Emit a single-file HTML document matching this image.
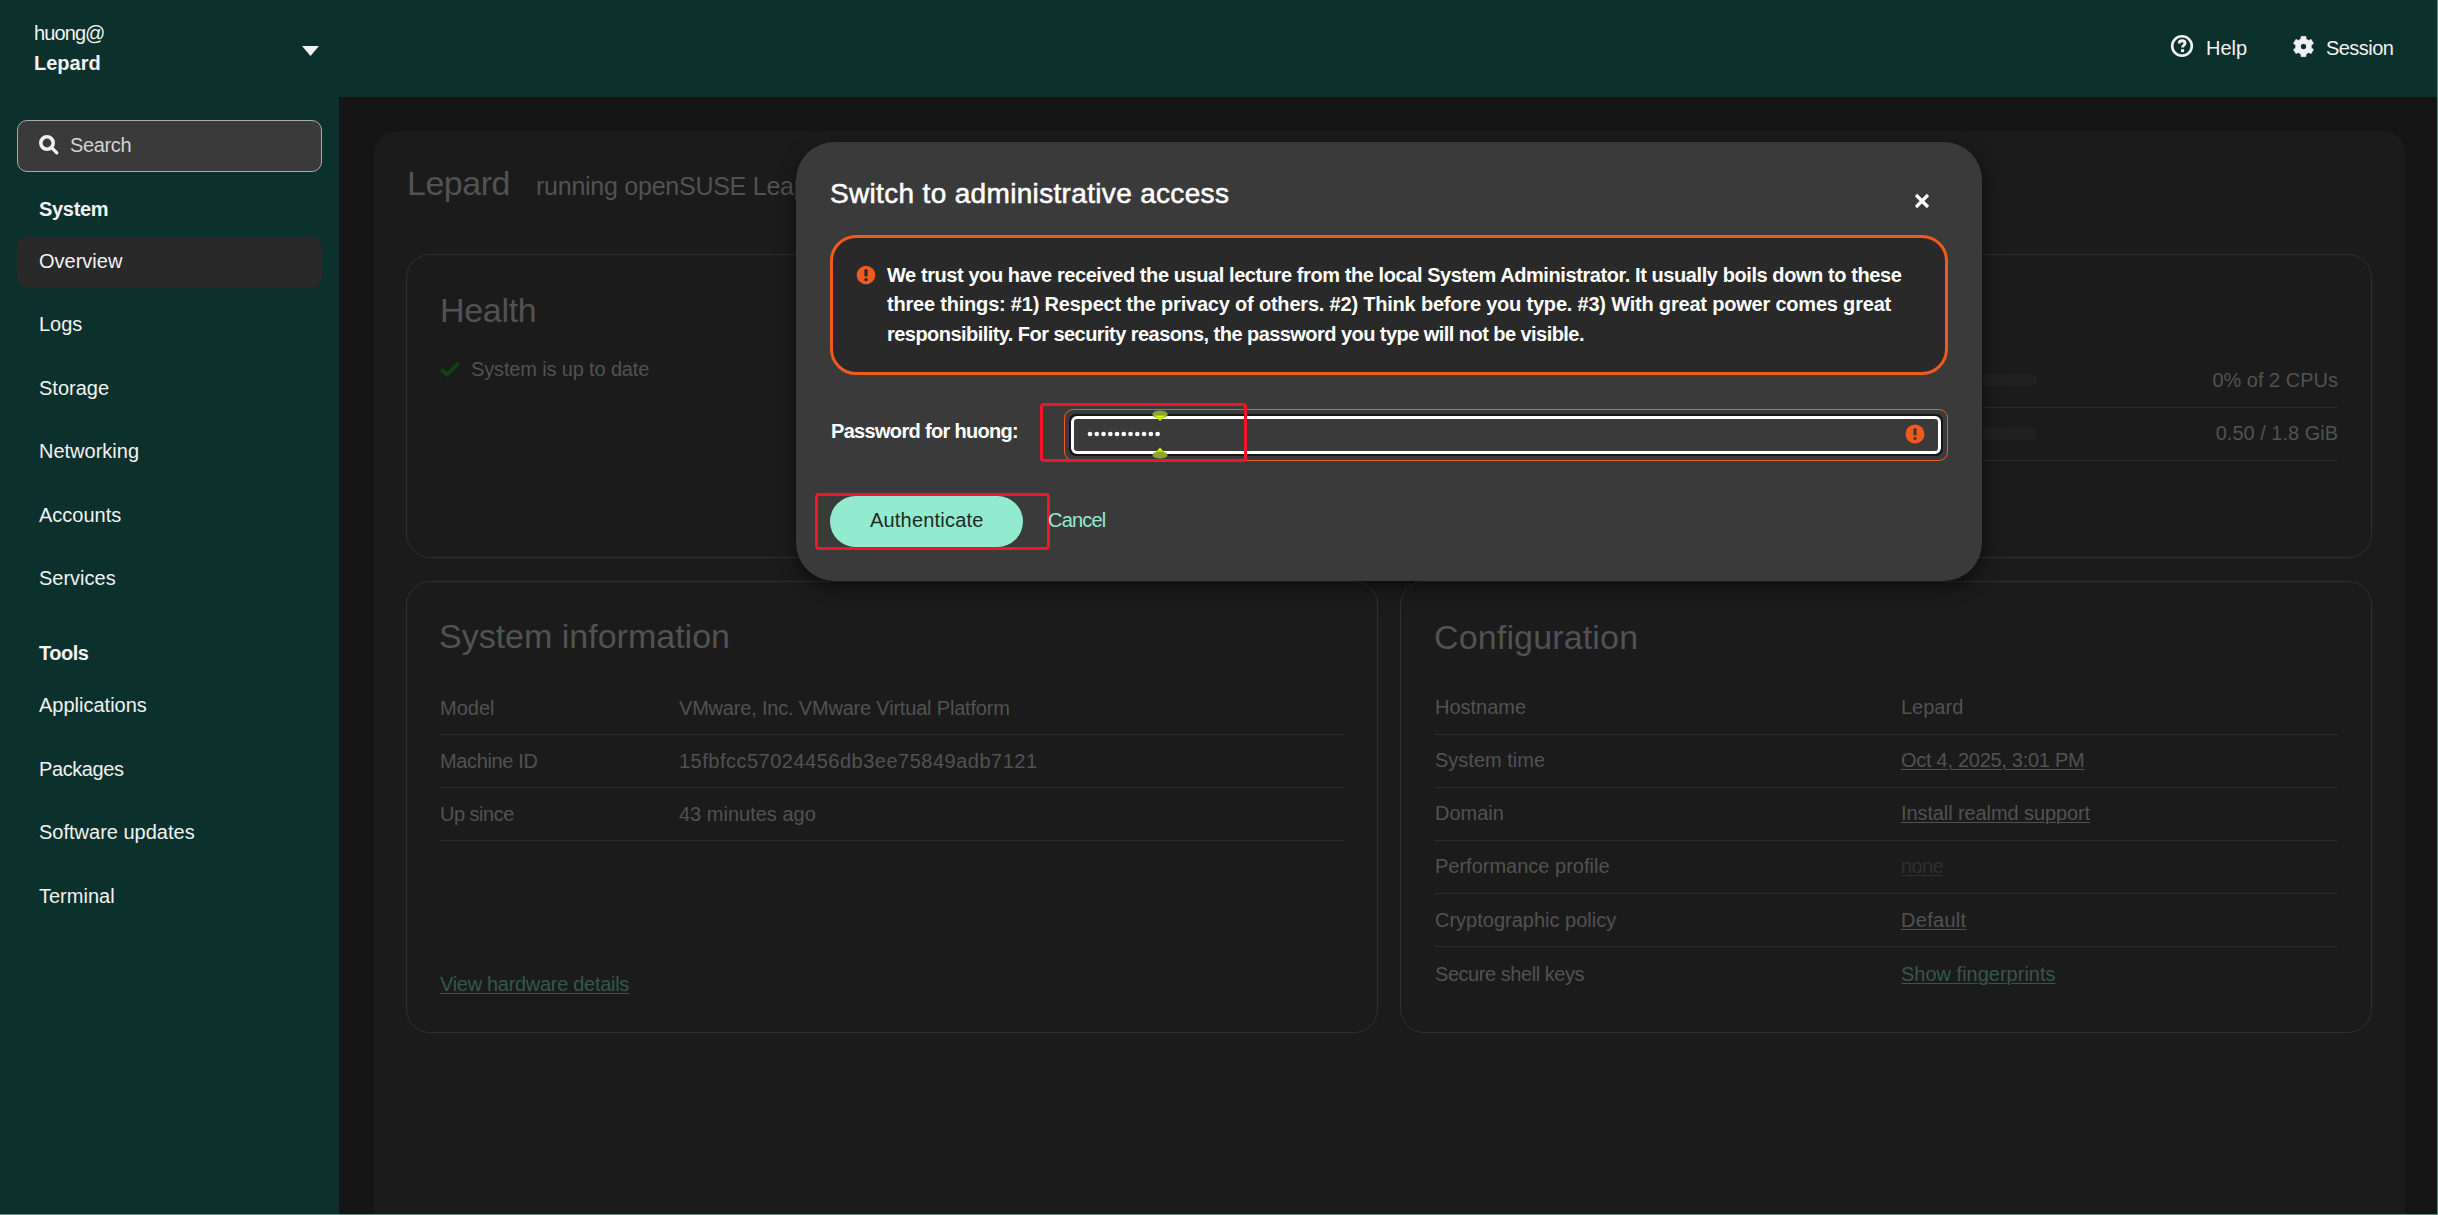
<!DOCTYPE html>
<html><head><meta charset="utf-8">
<style>
*{box-sizing:border-box;margin:0;padding:0}
html,body{width:2438px;height:1215px;overflow:hidden;background:#151515;font-family:"Liberation Sans",sans-serif;}
.abs{position:absolute;white-space:nowrap}
#header{position:absolute;left:0;top:0;width:2438px;height:97px;background:#0c302c}
#sidebar{position:absolute;left:0;top:97px;width:339px;height:1118px;background:#0c302c}
#main{position:absolute;left:339px;top:97px;width:2099px;height:1118px;background:#151515}
#panel{position:absolute;left:374px;top:131px;width:2031px;height:1100px;background:#1b1b1b;border-radius:22px}
.side{color:#f2f2f2;font-size:20px;line-height:24px}
.card{position:absolute;border:1.5px solid #2f2f2f;border-radius:24px}
.dim{color:#525252}
.hr{position:absolute;height:1px;background:#2c2c2c}
#modal{position:absolute;left:796px;top:142px;width:1186px;height:439px;background:#3a3a3a;border-radius:38px;box-shadow:0 6px 18px rgba(0,0,0,.55)}
</style></head>
<body>
<div id="header"></div>
<div id="sidebar"></div>
<div id="main"></div>
<div id="panel"></div>

<!-- header content -->
<div class="abs side" style="left:34px;top:21px;font-size:20px;letter-spacing:-0.9px">huong@</div>
<div class="abs side" style="left:34px;top:51px;font-size:20px;font-weight:bold">Lepard</div>
<svg class="abs" style="left:301px;top:45px" width="19" height="12" viewBox="0 0 19 12"><path d="M1 1 L18 1 L9.5 11 Z" fill="#f2f2f2"/></svg>

<!-- search -->
<div class="abs" style="left:17px;top:120px;width:305px;height:52px;background:#3a3a3a;border:1.5px solid #a9a9a9;border-radius:10px"></div>
<svg class="abs" style="left:38px;top:134px" width="22" height="22" viewBox="0 0 22 22"><circle cx="9" cy="9" r="6.2" fill="none" stroke="#f0f0f0" stroke-width="3.6"/><path d="M13.4 13.4 L18.8 18.8" stroke="#f0f0f0" stroke-width="3.3" stroke-linecap="round"/></svg>
<div class="abs" style="left:70px;top:133px;font-size:20px;line-height:24px;color:#d2d2d2;letter-spacing:-0.35px">Search</div>

<div class="abs side" style="left:39px;top:197px;font-weight:bold;letter-spacing:-0.3px">System</div>
<div class="abs" style="left:17px;top:237px;width:305px;height:51px;background:#292929;border-radius:10px"></div>
<div class="abs side" style="left:39px;top:249px">Overview</div>
<div class="abs side" style="left:39px;top:312px">Logs</div>
<div class="abs side" style="left:39px;top:376px">Storage</div>
<div class="abs side" style="left:39px;top:439px">Networking</div>
<div class="abs side" style="left:39px;top:503px">Accounts</div>
<div class="abs side" style="left:39px;top:566px">Services</div>
<div class="abs side" style="left:39px;top:641px;font-weight:bold;letter-spacing:-0.5px">Tools</div>
<div class="abs side" style="left:39px;top:693px">Applications</div>
<div class="abs side" style="left:39px;top:757px;letter-spacing:-0.4px">Packages</div>
<div class="abs side" style="left:39px;top:820px">Software updates</div>
<div class="abs side" style="left:39px;top:884px">Terminal</div>

<!-- header right -->
<svg class="abs" style="left:2170px;top:34.2px" width="24" height="24" viewBox="0 0 24 24"><circle cx="12" cy="12" r="9.8" fill="none" stroke="#f2f2f2" stroke-width="2.6"/><path d="M9.2 9.6 C9.2 7.6 10.5 6.7 12.1 6.7 C13.8 6.7 15 7.7 15 9.2 C15 11.2 12.6 11.4 12.6 13.4" fill="none" stroke="#f2f2f2" stroke-width="2.9"/><rect x="11" y="15.2" width="3.1" height="2.9" fill="#f2f2f2"/></svg>
<div class="abs side" style="left:2206px;top:36px">Help</div>
<svg class="abs" style="left:2291.5px;top:34.9px" width="23" height="23" viewBox="0 0 24 24"><path fill="#f0f0f0" stroke="#f0f0f0" stroke-width="0.8" stroke-linejoin="round" fill-rule="evenodd" d="M9.33 4.25 L9.57 1.48 L14.43 1.48 L14.67 4.25 L17.38 5.81 L19.90 4.63 L22.33 8.84 L20.05 10.44 L20.05 13.56 L22.33 15.16 L19.90 19.37 L17.38 18.19 L14.67 19.75 L14.43 22.52 L9.57 22.52 L9.33 19.75 L6.62 18.19 L4.10 19.37 L1.67 15.16 L3.95 13.56 L3.95 10.44 L1.67 8.84 L4.10 4.63 L6.62 5.81 Z M12 9.2 A2.8 2.8 0 1 0 12 14.8 A2.8 2.8 0 1 0 12 9.2 Z"/><circle cx="12" cy="12" r="2.7" fill="#0c302c"/></svg>
<div class="abs side" style="left:2326px;top:36px;letter-spacing:-0.55px">Session</div>

<!-- background page content -->
<div class="abs dim" style="left:407px;top:163px;font-size:34px;line-height:40px;letter-spacing:-0.5px">Lepard</div>
<div class="abs dim" style="left:536px;top:171.3px;font-size:25px;line-height:30px;letter-spacing:-0.25px">running openSUSE Leap 15.6</div>

<div class="card" style="left:406px;top:254px;width:1966px;height:304px"></div>
<div class="abs dim" style="left:440px;top:290px;font-size:34px;line-height:40px;letter-spacing:-0.3px">Health</div>
<svg class="abs" style="left:439px;top:361px" width="22" height="16" viewBox="0 0 22 16"><path d="M2.2 8.2 L8 13.6 L19.6 2.2" fill="none" stroke="#0f440f" stroke-width="3.6"/></svg>
<div class="abs dim" style="left:471px;top:356.8px;font-size:20px;line-height:24px;letter-spacing:-0.15px">System is up to date</div>
<div class="abs" style="left:1800px;top:374px;width:237px;height:12px;background:#202020;border-radius:6px"></div>
<div class="abs" style="left:1800px;top:428px;width:237px;height:12px;background:#202020;border-radius:6px"></div>
<div class="abs dim" style="left:2138px;top:368px;width:200px;text-align:right;font-size:20px;line-height:24px">0% of 2 CPUs</div>
<div class="abs dim" style="left:2138px;top:421px;width:200px;text-align:right;font-size:20px;line-height:24px">0.50 / 1.8 GiB</div>
<div class="hr" style="left:1435px;top:407px;width:903px"></div>
<div class="hr" style="left:1435px;top:460px;width:903px"></div>

<div class="card" style="left:406px;top:581px;width:972px;height:452px"></div>
<div class="abs dim" style="left:439px;top:616px;font-size:34px;line-height:40px">System information</div>
<div class="abs dim" style="left:440px;top:696px;font-size:20px;line-height:24px">Model</div>
<div class="abs dim" style="left:679px;top:696px;font-size:20px;line-height:24px;letter-spacing:-0.19px">VMware, Inc. VMware Virtual Platform</div>
<div class="hr" style="left:440px;top:734px;width:904px"></div>
<div class="abs dim" style="left:440px;top:749px;font-size:20px;line-height:24px;letter-spacing:-0.35px">Machine ID</div>
<div class="abs dim" style="left:679px;top:749px;font-size:20px;line-height:24px;letter-spacing:0.5px">15fbfcc57024456db3ee75849adb7121</div>
<div class="hr" style="left:440px;top:787px;width:904px"></div>
<div class="abs dim" style="left:440px;top:801.7px;font-size:20px;line-height:24px;letter-spacing:-0.5px">Up since</div>
<div class="abs dim" style="left:679px;top:801.7px;font-size:20px;line-height:24px">43 minutes ago</div>
<div class="hr" style="left:440px;top:840px;width:904px"></div>
<div class="abs" style="left:440px;top:972.4px;font-size:20px;line-height:24px;letter-spacing:-0.3px;color:#35574c;text-decoration:underline;text-decoration-thickness:1px;text-underline-offset:2px">View hardware details</div>

<div class="card" style="left:1400px;top:581px;width:972px;height:452px"></div>
<div class="abs dim" style="left:1434px;top:616.7px;font-size:34px;line-height:40px;letter-spacing:0.15px">Configuration</div>
<div class="abs dim" style="left:1435px;top:695.1px;font-size:20px;line-height:24px">Hostname</div>
<div class="abs dim" style="left:1901px;top:695.1px;font-size:20px;line-height:24px">Lepard</div>
<div class="hr" style="left:1435px;top:734px;width:903px"></div>
<div class="abs dim" style="left:1435px;top:747.9px;font-size:20px;line-height:24px">System time</div>
<div class="abs dim" style="left:1901px;top:747.9px;font-size:20px;line-height:24px;letter-spacing:-0.28px;text-decoration:underline;text-decoration-thickness:1px;text-underline-offset:2px">Oct 4, 2025, 3:01 PM</div>
<div class="hr" style="left:1435px;top:787px;width:903px"></div>
<div class="abs dim" style="left:1435px;top:801.1px;font-size:20px;line-height:24px">Domain</div>
<div class="abs dim" style="left:1901px;top:801.1px;font-size:20px;line-height:24px;letter-spacing:-0.1px;text-decoration:underline;text-decoration-thickness:1px;text-underline-offset:2px">Install realmd support</div>
<div class="hr" style="left:1435px;top:840px;width:903px"></div>
<div class="abs dim" style="left:1435px;top:854.1px;font-size:20px;line-height:24px">Performance profile</div>
<div class="abs" style="left:1901px;top:854.1px;font-size:20px;line-height:24px;letter-spacing:-0.6px;color:#2f2f2f;text-decoration:underline;text-decoration-thickness:1px;text-underline-offset:2px">none</div>
<div class="hr" style="left:1435px;top:893px;width:903px"></div>
<div class="abs dim" style="left:1435px;top:907.8px;font-size:20px;line-height:24px">Cryptographic policy</div>
<div class="abs dim" style="left:1901px;top:907.8px;font-size:20px;line-height:24px;letter-spacing:0.3px;text-decoration:underline;text-decoration-thickness:1px;text-underline-offset:2px">Default</div>
<div class="hr" style="left:1435px;top:946px;width:903px"></div>
<div class="abs dim" style="left:1435px;top:961.5px;font-size:20px;line-height:24px;letter-spacing:-0.45px">Secure shell keys</div>
<div class="abs" style="left:1901px;top:961.5px;font-size:20px;line-height:24px;color:#35574c;text-decoration:underline;text-decoration-thickness:1px;text-underline-offset:2px">Show fingerprints</div>

<!-- modal -->
<div id="modal"></div>
<div class="abs" style="left:830px;top:178px;font-size:28px;line-height:32px;color:#fff;letter-spacing:0.33px;-webkit-text-stroke:0.55px #fff">Switch to administrative access</div>
<svg class="abs" style="left:1914px;top:193px" width="16" height="16" viewBox="0 0 16 16"><path d="M2 2 L14 14 M14 2 L2 14" stroke="#fff" stroke-width="3.2" stroke-linecap="butt"/></svg>
<div class="abs" style="left:830px;top:235px;width:1118px;height:140px;background:#292929;border:3px solid #f05a1e;border-radius:26px"></div>
<svg class="abs" style="left:856px;top:265px" width="20" height="20" viewBox="0 0 20 20"><circle cx="10" cy="10" r="9.3" fill="#f05a1e"/><rect x="8.4" y="4.2" width="3.2" height="7.4" rx="1" fill="#292929"/><circle cx="10" cy="14.6" r="1.7" fill="#292929"/></svg>
<div class="abs" style="left:887px;top:263px;font-size:20px;line-height:24px;color:#fff;font-weight:bold;letter-spacing:-0.42px">We trust you have received the usual lecture from the local System Administrator. It usually boils down to these</div>
<div class="abs" style="left:887px;top:291.7px;font-size:20px;line-height:24px;color:#fff;font-weight:bold;letter-spacing:-0.2px">three things: #1) Respect the privacy of others. #2) Think before you type. #3) With great power comes great</div>
<div class="abs" style="left:887px;top:322px;font-size:20px;line-height:24px;color:#fff;font-weight:bold;letter-spacing:-0.55px">responsibility. For security reasons, the password you type will not be visible.</div>
<div class="abs" style="left:831px;top:418.5px;font-size:20px;line-height:24px;color:#fff;font-weight:bold;letter-spacing:-0.68px">Password for huong:</div>
<div class="abs" style="left:1064px;top:409px;width:884px;height:52px;border:1.5px solid #f05a1e;border-radius:9px"></div>
<div class="abs" style="left:1069px;top:414px;width:874px;height:42px;background:#151515;border-radius:7px"></div>
<div class="abs" style="left:1071px;top:416px;width:870px;height:38px;background:#3a3a3a;border:3px solid #fff;border-radius:6px"></div>
<svg class="abs" style="left:1085.3px;top:428.9px" width="80" height="10" viewBox="0 0 80 10"><circle cx="5.00" cy="5" r="2.35" fill="#fff"/><circle cx="11.76" cy="5" r="2.35" fill="#fff"/><circle cx="18.52" cy="5" r="2.35" fill="#fff"/><circle cx="25.28" cy="5" r="2.35" fill="#fff"/><circle cx="32.04" cy="5" r="2.35" fill="#fff"/><circle cx="38.80" cy="5" r="2.35" fill="#fff"/><circle cx="45.56" cy="5" r="2.35" fill="#fff"/><circle cx="52.32" cy="5" r="2.35" fill="#fff"/><circle cx="59.08" cy="5" r="2.35" fill="#fff"/><circle cx="65.84" cy="5" r="2.35" fill="#fff"/><circle cx="72.60" cy="5" r="2.35" fill="#fff"/></svg>
<svg class="abs" style="left:1905px;top:424px" width="20" height="20" viewBox="0 0 20 20"><circle cx="10" cy="10" r="9.5" fill="#f05a1e"/><rect x="8.4" y="4.2" width="3.2" height="7.4" rx="1" fill="#3a3a3a"/><circle cx="10" cy="14.6" r="1.7" fill="#3a3a3a"/></svg>
<div class="abs" style="left:1040px;top:403px;width:207px;height:59px;border:3.2px solid #f5142a;border-radius:4px"></div>
<svg class="abs" style="left:1151.5px;top:409px" width="16" height="52" viewBox="0 0 16 52"><ellipse cx="8" cy="5.4" rx="7.6" ry="4" fill="#8ba52a"/><path d="M2.5 6.6 L13.5 6.6 L8 12 Z" fill="#c2f000"/><path d="M2.5 44.4 L13.5 44.4 L8 38.6 Z" fill="#c2f000"/><ellipse cx="8" cy="46" rx="7.6" ry="3.6" fill="#8ba52a"/></svg>
<div class="abs" style="left:814.5px;top:493px;width:235px;height:57px;border:3.2px solid #f5142a;border-radius:4px"></div>
<div class="abs" style="left:830px;top:496px;width:193px;height:51px;background:#92ebcf;border-radius:26px"></div>
<div class="abs" style="left:870px;top:508px;font-size:20px;line-height:24px;color:#222828;letter-spacing:0.2px">Authenticate</div>
<div class="abs" style="left:1048px;top:508px;font-size:20px;line-height:24px;color:#92ebcf;letter-spacing:-0.8px">Cancel</div>

<div class="abs" style="left:2437px;top:0;width:1px;height:1215px;background:#5f8a80"></div>
<div class="abs" style="left:0;top:1214px;width:2438px;height:1px;background:#5f8a80"></div>
</body></html>
